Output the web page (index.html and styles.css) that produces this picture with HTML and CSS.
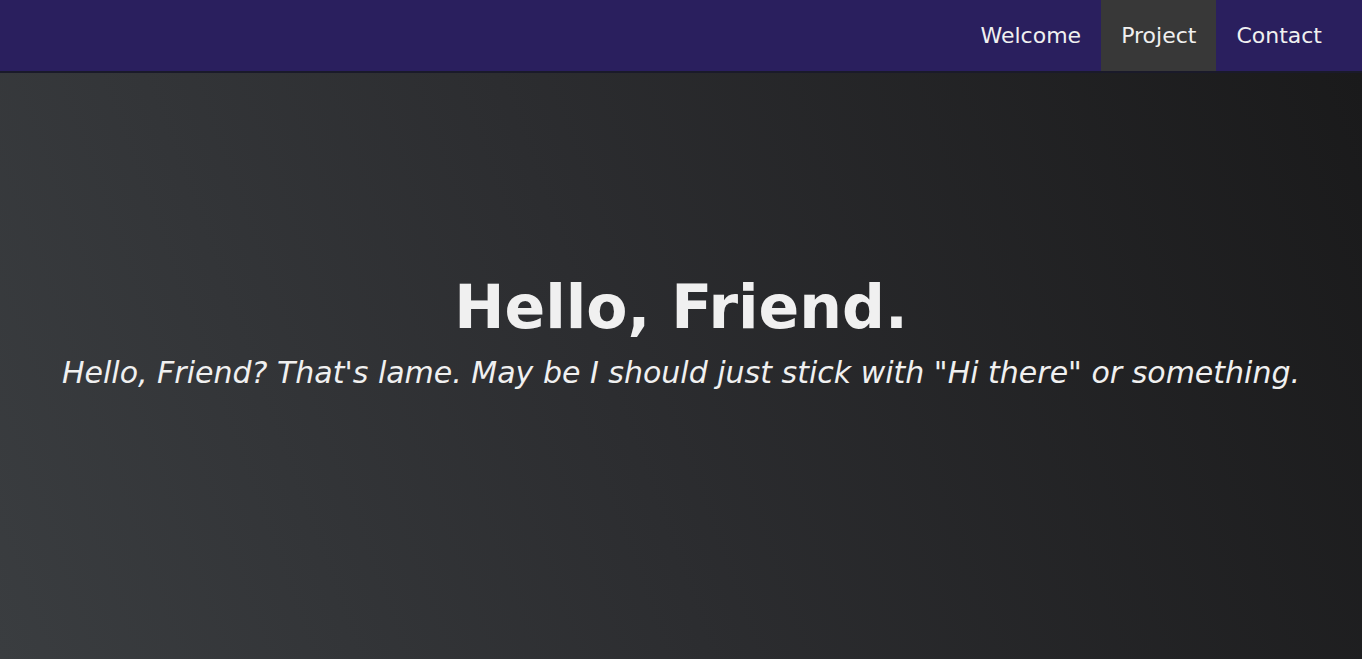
FILE: index.html
```html
<!DOCTYPE html>
<html lang="en">
<head>
<meta charset="utf-8">
<title>Hello, Friend.</title>
<link rel="stylesheet" href="styles.css">
</head>
<body>
<header class="navbar">
  <nav class="nav">
    <a class="nav-link" href="#welcome">Welcome</a>
    <a class="nav-link active" href="#project">Project</a>
    <a class="nav-link" href="#contact">Contact</a>
  </nav>
</header>
<main class="hero">
  <h1 class="hero-title">Hello, Friend.</h1>
  <p class="hero-sub">Hello, Friend? That's lame. May be I should just stick with "Hi there" or something.</p>
</main>
</body>
</html>
```

FILE: styles.css
```css
* { box-sizing: border-box; }
html, body { margin: 0; height: 100%; }
body {
  font-family: "DejaVu Sans", sans-serif;
  background: #1b1b1c;
  display: flex;
  flex-direction: column;
}
.navbar {
  background: #2a1f5e;
  height: 73px;
  border-bottom: 2px solid #1a1a2a;
  display: flex;
  justify-content: flex-end;
  padding-right: 20px;
  flex-shrink: 0;
}
.nav { display: flex; }
.nav-link {
  color: #f0f0f0;
  text-decoration: none;
  font-size: 22px;
  padding: 0 20px;
  display: flex;
  align-items: center;
  height: 71px;
}
.nav-link.active { background: #383838; }
.hero {
  flex: 1;
  background: linear-gradient(70deg, #3a3d40 0%, #2c2d30 45%, #1a1a1b 100%);
  display: flex;
  flex-direction: column;
  align-items: center;
  justify-content: center;
  color: #f0f0f0;
  text-align: center;
  padding-bottom: 70px;
}
.hero-title {
  margin: 0;
  font-size: 60px;
  font-weight: bold;
  line-height: 1.2;
}
.hero-sub {
  margin: 10px 0 0;
  font-size: 30px;
  font-style: italic;
  line-height: 1.3;
}
```
